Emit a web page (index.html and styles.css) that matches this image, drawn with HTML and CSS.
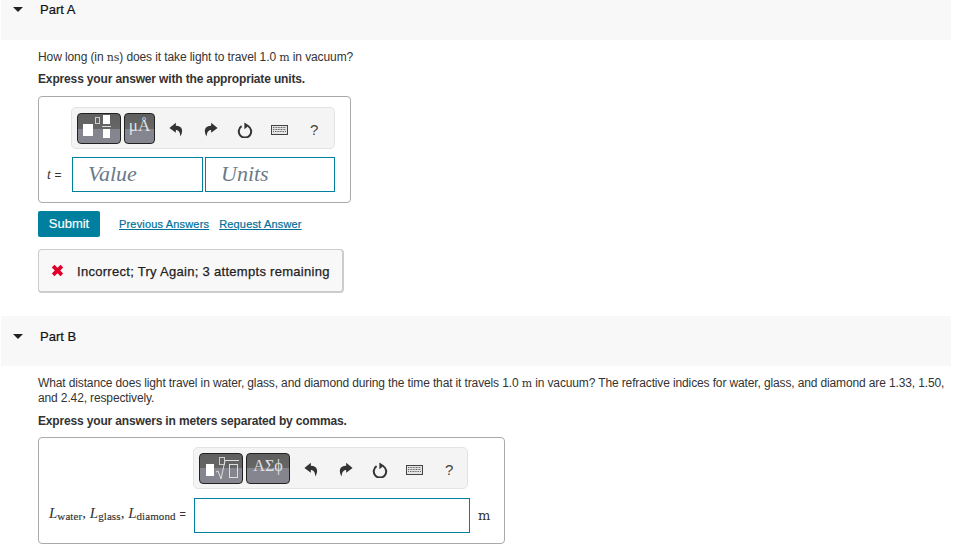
FILE: index.html
```html
<!DOCTYPE html>
<html lang="en">
<head>
<meta charset="utf-8">
<title>Parts</title>
<link rel="stylesheet" href="styles.css">
</head>
<body>
<svg class="defs" width="0" height="0" aria-hidden="true">
  <symbol id="undo" viewBox="0 0 14 14"><path d="M6.4 .6 L0.4 5.6 L6.4 10 V7.4 C9 7.4 10.4 9.4 10.6 13.6 C13.6 8.6 12.8 3.8 6.4 3.6 Z"/></symbol>
  <symbol id="redo" viewBox="0 0 14 14"><path d="M7.6 .6 L13.6 5.6 L7.6 10 V7.4 C5 7.4 3.6 9.4 3.4 13.6 C.4 8.6 1.2 3.8 7.6 3.6 Z"/></symbol>
  <symbol id="reset" viewBox="0 0 16 16"><path d="M4.6 4.2 A6.2 6.2 0 1 0 11 4" fill="none" stroke="#333" stroke-width="2"/><path d="M7.4 .4 L7.4 7.2 L12 3.6 Z" fill="#333"/></symbol>
  <symbol id="keys" viewBox="0 0 17 10"><rect x="0.5" y="0.5" width="16" height="9" fill="#e4e4e4" stroke="#444"/><path d="M2 2.5H15M2 4.5H15M2 6.5H3M4 6.5H13M14 6.5H15" stroke="#666" stroke-width="1" stroke-dasharray="1 .6"/></symbol>
</svg>

<section class="part part-a">
  <header class="part-head"><span class="caret"></span><h2 class="part-title">Part A</h2></header>
  <div class="part-body">
    <p class="q">How long (in <span class="unit">ns</span>) does it take light to travel 1.0 <span class="unit">m</span> in vacuum?</p>
    <p class="hint">Express your answer with the appropriate units.</p>
    <div class="answer answer-a">
      <div class="toolbar tb-a">
        <div class="tool tool-wide">
          <svg width="44" height="29" viewBox="0 0 44 29"><rect x="6" y="10" width="10" height="12" fill="#fff"/><rect x="18.5" y="3.5" width="4" height="6" fill="none" stroke="#ccc"/><rect x="26" y="1" width="7" height="9" fill="#fff"/><rect x="25" y="12" width="9" height="1" fill="#ddd"/><rect x="26" y="15" width="7" height="9" fill="#fff"/></svg>
        </div>
        <div class="tool tool-sym"><span>μÅ</span></div>
        <div class="actions">
          <span class="slot"><svg class="ic" width="15" height="15"><use href="#undo"/></svg></span>
          <span class="slot"><svg class="ic" width="15" height="15"><use href="#redo"/></svg></span>
          <span class="slot"><svg class="ic" width="16" height="16"><use href="#reset"/></svg></span>
          <span class="slot"><svg class="ic" width="17" height="10"><use href="#keys"/></svg></span>
          <span class="slot qm">?</span>
        </div>
      </div>
      <div class="row-a">
        <span class="lbl"><i>t</i> <span class="eq">=</span></span>
        <div class="field f-val">Value</div>
        <div class="field f-unit">Units</div>
      </div>
    </div>
    <div class="submit-row">
      <button class="submit">Submit</button>
      <a class="lnk lnk-first" href="#">Previous Answers</a>
      <a class="lnk" href="#">Request Answer</a>
    </div>
    <div class="feedback">
      <svg width="13" height="13" viewBox="0 0 12 12"><path d="M1.5 3.2 L3.2 1.5 L6 4.3 L8.8 1.5 L10.5 3.2 L7.7 6 L10.5 8.8 L8.8 10.5 L6 7.7 L3.2 10.5 L1.5 8.8 L4.3 6 Z" fill="#e0002a" stroke="#e0002a" stroke-width="1"/></svg>
      <span class="fb-text">Incorrect; Try Again; 3 attempts remaining</span>
    </div>
  </div>
</section>

<section class="part part-b">
  <header class="part-head"><span class="caret"></span><h2 class="part-title">Part B</h2></header>
  <div class="part-body">
    <p class="q q-b">What distance does light travel in water, glass, and diamond during the time that it travels 1.0 <span class="unit">m</span> in vacuum? The refractive indices for water, glass, and diamond are 1.33, 1.50, and 2.42, respectively.</p>
    <p class="hint hint-b">Express your answers in meters separated by commas.</p>
    <div class="answer answer-b">
      <div class="toolbar tb-b">
        <div class="tool tool-root">
          <svg width="44" height="29" viewBox="0 0 44 29"><rect x="7" y="10" width="8" height="12" fill="#fff"/><rect x="20.5" y="3.5" width="5" height="7" fill="none" stroke="#ccc"/><path d="M17 18 L19 17 L22 25 L26 6.5 H40" fill="none" stroke="#ddd"/><rect x="30.5" y="10.5" width="8" height="13" fill="none" stroke="#ddd"/></svg>
        </div>
        <div class="tool tool-greek"><span>ΑΣϕ</span></div>
        <div class="actions actions-b">
          <span class="slot"><svg class="ic" width="15" height="15"><use href="#undo"/></svg></span>
          <span class="slot"><svg class="ic" width="15" height="15"><use href="#redo"/></svg></span>
          <span class="slot"><svg class="ic" width="16" height="16"><use href="#reset"/></svg></span>
          <span class="slot"><svg class="ic" width="17" height="10"><use href="#keys"/></svg></span>
          <span class="slot qm">?</span>
        </div>
      </div>
      <div class="row-b">
        <span class="lbl-b"><i>L</i><sub>water</sub>, <i>L</i><sub>glass</sub>, <i>L</i><sub>diamond</sub> <span class="eq">=</span></span>
        <div class="field f-wide"></div>
        <span class="unit unit-m">m</span>
      </div>
    </div>
  </div>
</section>
</body>
</html>
```
FILE: styles.css
```css
* { box-sizing: border-box; }
html, body { margin: 0; padding: 0; }
body { background: #fff; color: #212121; font-family: "Liberation Sans", Arial, sans-serif; font-size: 12px; line-height: 15px; width: 969px; height: 553px; overflow: hidden; }
.defs { display: block; height: 0; }
.part-head { margin-left: 1px; width: 950px; height: 40px; background: #f8f8f8; display: flex; align-items: flex-start; padding-top: 2px; }
.part-b .part-head { height: 50px; padding-top: 13px; }
.part-b { margin-top: 23px; }
.caret { width: 0; height: 0; border-left: 5px solid transparent; border-right: 5px solid transparent; border-top: 5px solid #222; margin: 5px 0 0 12px; }
.part-title { margin: 0 0 0 17px; font-size: 13px; font-weight: 400; line-height: 16px; color: #111; -webkit-text-stroke: .2px #111; }
.part-body { padding-left: 38px; }
.q { margin: 10px 0 0; color: #333; width: 913px; letter-spacing: -.1px; }
.hint { margin: 7px 0 0; font-weight: 700; color: #333; letter-spacing: -.15px; }
.q-b { letter-spacing: -.13px; }
.hint-b { margin-top: 8px; letter-spacing: -.16px; }
.unit { font-family: "DejaVu Serif", "Liberation Serif", serif; font-size: 11px; }
.answer { border: 1px solid #aaa; border-radius: 4px; background: #fff; }
.answer-a { margin-top: 9px; width: 313px; height: 107px; padding: 10px 0 0 32px; }
.answer-b { margin-top: 8px; width: 467px; height: 107px; padding: 9px 0 0 154px; }
.toolbar { height: 42px; background: #f4f4f4; border: 1px solid #e3e3e3; border-radius: 5px; display: flex; align-items: center; padding-left: 5px; gap: 3px; }
.tb-a { width: 264px; }
.tb-b { width: 275px; }
.tool { height: 31px; border: 1px solid #222; border-radius: 4px; background: linear-gradient(#5f5f5f 0, #666 50%, #85858f 50%, #85858f 100%); color: #e2e2e2; font-family: "Liberation Serif", serif; display: flex; align-items: center; justify-content: center; overflow: hidden; padding-bottom: 6px; }
.tool svg { display: block; flex: none; margin-top: 6px; }
.tool-wide { width: 44px; }
.tool-sym { width: 31px; font-size: 17px; }
.tool-root { width: 44px; }
.tool-greek { width: 44px; font-size: 16px; }
.actions { display: flex; align-items: center; margin-left: 1px; padding-top: 3px; }
.actions-b { margin-left: 1px; }
.slot { width: 34.5px; display: flex; align-items: center; justify-content: center; }
.ic { display: block; fill: #333; }
.qm { font-size: 15px; color: #444; }
.row-a { display: flex; align-items: center; margin: 8px 0 0 -24px; }
.lbl { width: 25px; font-family: "Liberation Serif", serif; font-size: 14px; color: #333; white-space: nowrap; }
.lbl .eq { font-size: 12px; }
.field { height: 35px; border: 1px solid #007f9f; background: #fff; font-family: "Liberation Serif", serif; font-style: italic; font-size: 22px; color: #6a7a88; line-height: 31px; padding-left: 15px; }
.f-val { width: 131px; margin-right: 2px; }
.f-unit { width: 130px; }
.submit-row { display: flex; align-items: center; margin-top: 8px; height: 26px; }
.submit { width: 62px; height: 26px; border: 0; border-radius: 2px; background: #007f9f; color: #fff; font-family: inherit; font-size: 13px; padding: 0 0 2px; -webkit-text-stroke: .15px #fff; }
.lnk { font-size: 11px; color: #00709a; font-weight: 400; margin-left: 10px; letter-spacing: .17px; -webkit-text-stroke: .2px #00709a; }
.lnk-first { margin-left: 19px; }
.feedback { margin-top: 12px; width: 306px; height: 44px; border: 1px solid #ccc; border-bottom-width: 2px; border-right-width: 2px; border-radius: 4px; background: #f8f8f8; display: flex; align-items: center; padding-left: 12px; gap: 13px; font-size: 13px; color: #222; letter-spacing: .29px; -webkit-text-stroke: .25px #222; }
.feedback svg { flex: none; }
.fb-text { padding-top: 1px; }
.row-b { display: flex; align-items: center; margin: 9px 0 0 -144px; }
.lbl-b { width: 145px; font-family: "Liberation Serif", serif; font-size: 15px; white-space: nowrap; color: #333; margin-bottom: 3px; }
.lbl-b sub { font-size: 11px; vertical-align: -2px; line-height: 0; letter-spacing: .1px; -webkit-text-stroke: .15px #333; }
.eq { font-family: "Liberation Sans", sans-serif; font-size: 11px; }
.f-wide { width: 276px; margin-left: 0; }
.unit-m { margin-left: 8px; font-size: 13px; color: #333; }
```
